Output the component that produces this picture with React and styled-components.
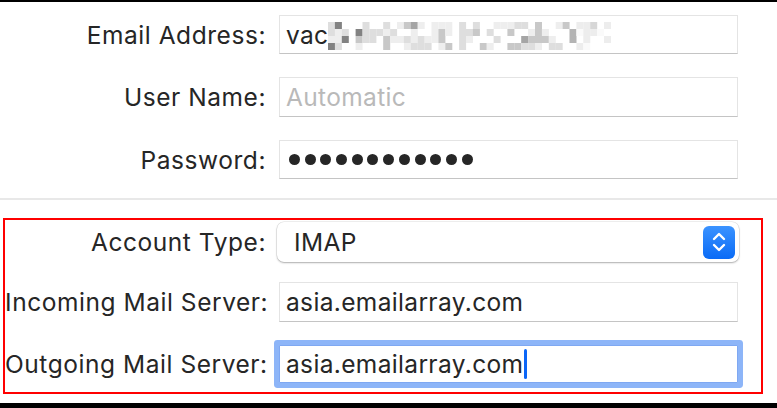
import React from 'react';
import styled, { createGlobalStyle } from 'styled-components';

const GlobalStyle = createGlobalStyle`
    html, body {
        margin: 0;
        padding: 0;
        background: #ffffff;
    }
    body {
        font-family: Inter, "Liberation Sans", sans-serif;
        color: #262626;
        -webkit-font-smoothing: antialiased;
    }
`

const Page = styled.div`
    width: 777px;
    height: 408px;
    display: flex;
    flex-direction: column;
    overflow: hidden;
    background: #ffffff;
`

const EdgeBar = styled.div`
    background: #000000;
    height: ${p => p.h}px;
    flex: ${p => p.grow ? '1 1 auto' : '0 0 auto'};
    margin-top: ${p => p.mt || 0}px;
`

const Section = styled.div`
    display: flex;
    flex-direction: column;
    padding-top: 13px;
    gap: 23px;
`

const Row = styled.div`
    display: grid;
    grid-template-columns: ${p => p.labelWidth}px auto;
    column-gap: ${p => p.gap || 13}px;
    align-items: center;
    height: ${p => p.h || 39}px;
    margin-top: ${p => p.mt || 0}px;
`

const Label = styled.label`
    text-align: right;
    font-size: 24.5px;
    letter-spacing: 0.55px;
    white-space: nowrap;
    color: #262626;
`

const Field = styled.div`
    box-sizing: border-box;
    width: 459px;
    height: ${p => p.h || 39}px;
    background: #ffffff;
    border: 1px solid #e4e4e4;
    border-bottom: 1.5px solid #c4c4c4;
    display: flex;
    align-items: center;
    padding-left: 6px;
    font-size: 24.5px;
    letter-spacing: 0.35px;
    color: ${p => p.placeholder ? '#b9b9b9' : '#262626'};
    white-space: nowrap;
    overflow: hidden;

    &.focused {
        border: 1px solid #7fa8f2;
        box-shadow: 0 0 0 5px #8db5f8;
        border-radius: 1px;
    }
`

const Dots = styled.div`
    display: flex;
    gap: 4.7px;
    padding-left: 3px;
`

const Dot = styled.span`
    width: 11px;
    height: 11px;
    border-radius: 50%;
    background: #262626;
`

const Caret = styled.span`
    display: inline-block;
    width: 3px;
    height: 30px;
    border-radius: 1.5px;
    background: #0b66f7;
    margin-left: 1px;
`

const Divider = styled.div`
    height: 2px;
    background: #e8e8e8;
    margin-top: 19px;
`

const Highlight = styled.div`
    margin: 18px 14px 0 3px;
    border: 2px solid #ff0000;
    padding: 2px 0 9px 0;
    display: flex;
    flex-direction: column;
`

const Select = styled.div`
    box-sizing: border-box;
    width: 462px;
    height: 40px;
    margin-left: -2px;
    border-radius: 7px;
    background: #ffffff;
    box-shadow: 0 0 0 0.5px rgba(0, 0, 0, 0.12), 0 1px 2px rgba(0, 0, 0, 0.28);
    display: flex;
    align-items: center;
    justify-content: space-between;
    padding: 0 4px 0 17px;
    font-size: 24.5px;
    letter-spacing: 0.4px;
`

const Stepper = styled.div`
    width: 32px;
    height: 33px;
    border-radius: 6px;
    background: linear-gradient(#3b93ff, #0a6bf6);
    display: flex;
    align-items: center;
    justify-content: center;
`

const BlurWrap = styled.span`
    display: inline-flex;
    margin-left: 0;
    margin-top: 2px;
`

// pixelated (redacted) part of the email address
const blurCells = (() => {
    let seed = 11;
    const rnd = () => {
        seed = (seed * 9301 + 49297) % 233280;
        return seed / 233280;
    };
    const cells = [];
    for (let r = 0; r < 4; r++) {
        for (let c = 0; c < 41; c++) {
            const v = rnd();
            if (v < 0.4) continue;
            let shade;
            if (c < 8 && v > 0.88) shade = 130;
            else if (v > 0.94) shade = 165;
            else if (v > 0.82) shade = 200;
            else if (v > 0.62) shade = 222;
            else shade = 238;
            if (c > 34) shade = Math.min(250, shade + 15);
            cells.push({ x: c * 6.9, y: r * 7, fill: `rgb(${shade},${shade},${shade})` });
        }
    }
    return cells;
})();

const Redacted = () => (
    <BlurWrap>
        <svg width="285" height="28" viewBox="0 0 285 28">
            {blurCells.map((b, i) => (
                <rect key={i} x={b.x} y={b.y} width="7" height="7" fill={b.fill} />
            ))}
        </svg>
    </BlurWrap>
)

const StepperIcon = () => (
    <svg width="16" height="24" viewBox="0 0 16 24">
        <path d="M3 9 L8 4 L13 9" stroke="#ffffff" strokeWidth="2.4" fill="none" strokeLinecap="round" strokeLinejoin="round" />
        <path d="M3 15 L8 20 L13 15" stroke="#ffffff" strokeWidth="2.4" fill="none" strokeLinecap="round" strokeLinejoin="round" />
    </svg>
)

const App = () => {
    return (
        <Page>
            <GlobalStyle />
            <EdgeBar h={2} />
            <Section>
                <Row labelWidth={266}>
                    <Label>Email Address:</Label>
                    <Field>vac<Redacted /></Field>
                </Row>
                <Row labelWidth={266} h={40}>
                    <Label>User Name:</Label>
                    <Field h={40} placeholder>Automatic</Field>
                </Row>
                <Row labelWidth={266}>
                    <Label>Password:</Label>
                    <Field>
                        <Dots>
                            {Array.from({ length: 12 }).map((_, i) => <Dot key={i} />)}
                        </Dots>
                    </Field>
                </Row>
            </Section>
            <Divider />
            <Highlight>
                <Row labelWidth={261} h={40}>
                    <Label>Account Type:</Label>
                    <Select>
                        <span>IMAP</span>
                        <Stepper><StepperIcon /></Stepper>
                    </Select>
                </Row>
                <Row labelWidth={261} h={40} mt={20}>
                    <Label>Incoming Mail Server:</Label>
                    <Field h={40}>asia.emailarray.com</Field>
                </Row>
                <Row labelWidth={261} h={38} mt={23}>
                    <Label>Outgoing Mail Server:</Label>
                    <Field h={38} className="focused">asia.emailarray.com<Caret /></Field>
                </Row>
            </Highlight>
            <EdgeBar grow mt={9} />
        </Page>
    )
}

export default App
